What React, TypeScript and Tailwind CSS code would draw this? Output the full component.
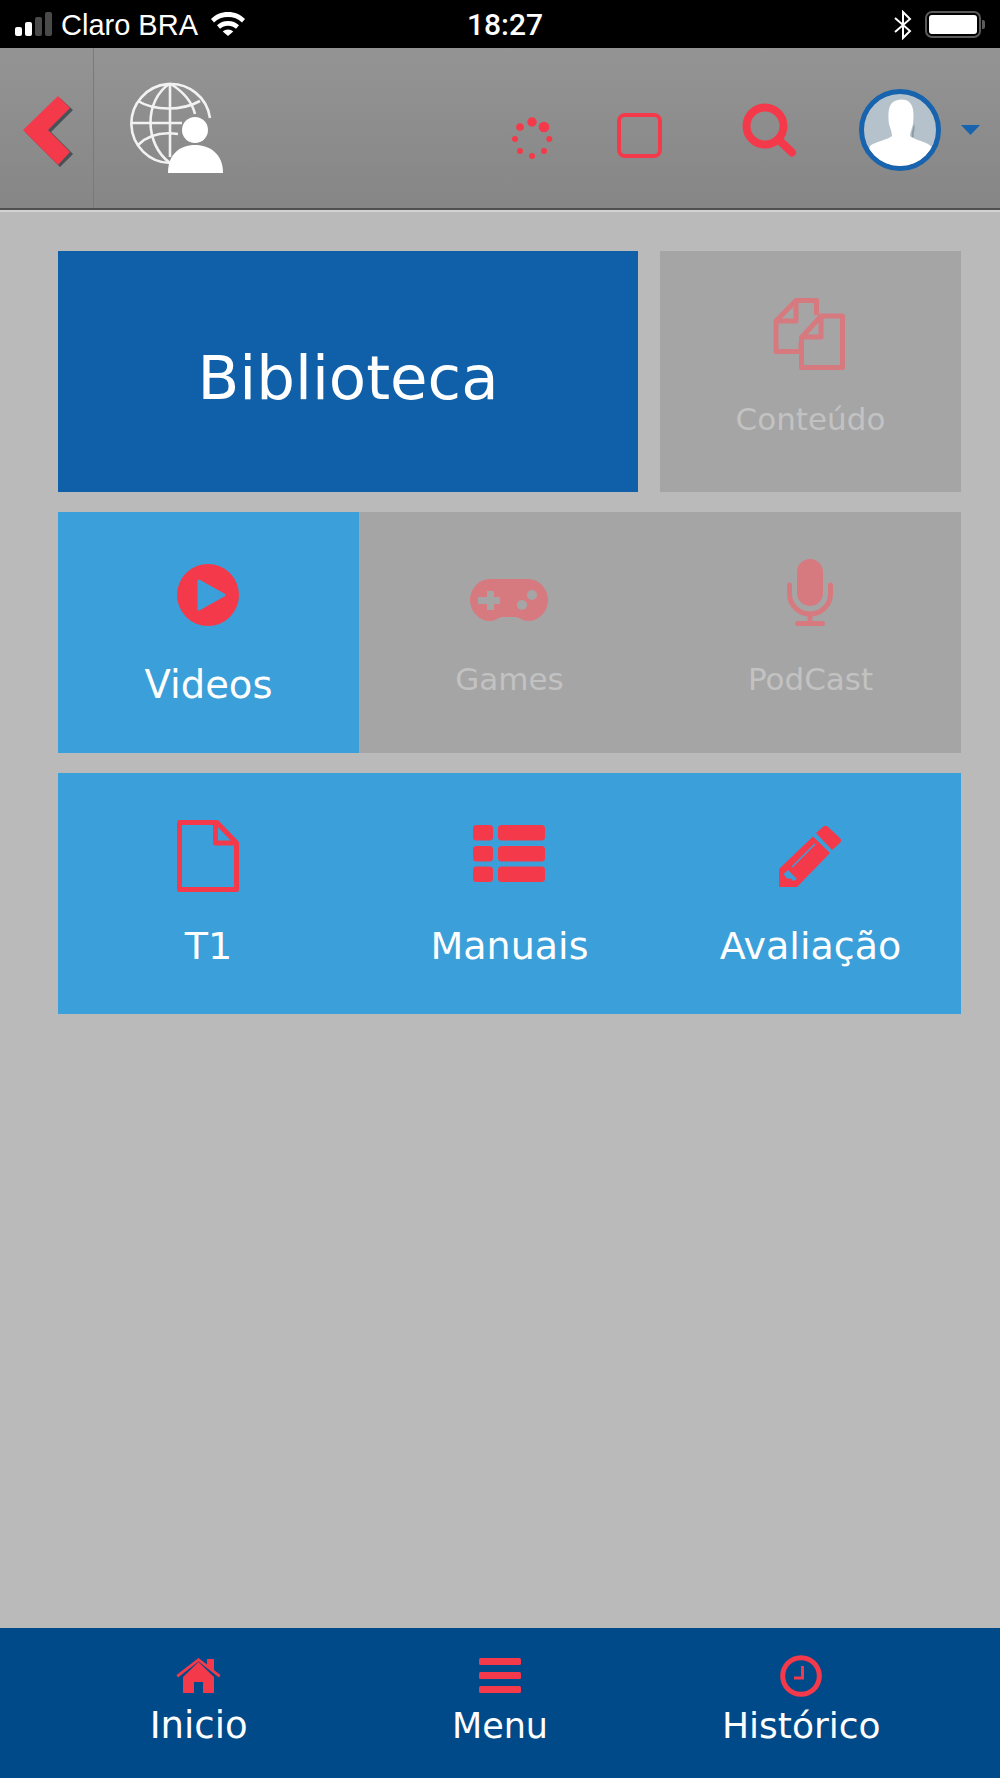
import React from "react";

const RED = "#f43a4a";
const FADED = "#d77a80";

function Chevron() {
  return (
    <svg className="ml-[23px] mt-[48px] shrink-0" width="50" height="72" viewBox="0 0 50 72">
      <polygon points="2,36 37,2 50,14 28,36 50,58 37,71" fill="#333d47" opacity="0.75" />
      <polygon points="0,34 35,0 47,12 25,34 47,56 35,69" fill={RED} />
    </svg>
  );
}

function GlobeUser() {
  return (
    <svg className="ml-[36px] mt-[34px] shrink-0" width="94" height="92" viewBox="0 0 94 92" fill="none" stroke="#f2f2f2" strokeWidth="2.6">
      <path d="M40 81 A39.500 39.500 0 1 1 80 36" />
      <path d="M40 1.500 C14 18 14 62 40 81" />
      <path d="M40 1.500 C54 10 62 20 65 32" />
      <path d="M40 1.500 V75" />
      <path d="M1 41 H52" />
      <path d="M8 19 C24 29 52 29 70 19" />
      <path d="M8 63 C20 51 34 50 48 52" />
      <circle cx="65" cy="48" r="13" fill="#ffffff" stroke="none" />
      <path d="M38 91 C38 72 50 63 65 63 C80 63 93 72 93 91 Z" fill="#ffffff" stroke="none" />
    </svg>
  );
}

function Spinner() {
  return (
    <svg className="ml-[287px] mt-[68px] shrink-0" width="44" height="44" viewBox="0 0 44 44" fill={RED}>
      <circle cx="21" cy="6" r="4.700" />
      <circle cx="33" cy="11" r="5.300" />
      <circle cx="38.300" cy="23" r="3" />
      <circle cx="33" cy="35" r="3" />
      <circle cx="21" cy="40" r="3" />
      <circle cx="9" cy="35" r="3" />
      <circle cx="4" cy="23" r="3" />
      <circle cx="9" cy="11" r="3.800" />
    </svg>
  );
}

function SearchIcon() {
  return (
    <svg className="ml-[80px] mt-[55px] shrink-0" width="55" height="54" viewBox="0 0 55 54" fill="none" stroke={RED}>
      <circle cx="23" cy="23" r="18.500" strokeWidth="8" />
      <path d="M37 37 L50 49.500" strokeWidth="8" strokeLinecap="round" />
    </svg>
  );
}

function Avatar() {
  return (
    <div className="ml-[62px] mt-[41px] h-[82px] w-[82px] shrink-0 overflow-hidden rounded-full border-[5px] border-[#1763ae] bg-[#b5c2cc]">
      <svg width="72" height="72" viewBox="0 0 72 72">
        <path d="M28 9 C32 5 42 4 46 9 C50 13 50 22 49 30 C48 35 46 38 46 42 C50 46 62 47 68 53 L72 72 H0 L6 52 C12 47 24 46 28 42 C28 38 26 34 25 30 C24 22 24 13 28 9 Z" fill="#ffffff" />
        <path d="M50 30 C49 35 47 38 48 43 L50 43 C49 38 52 34 50 30 Z" fill="#8e9ca6" />
      </svg>
    </div>
  );
}

function StatusBar() {
  return (
    <div className="flex h-[48px] items-start bg-black font-['Liberation_Sans',sans-serif] text-white">
      <div className="ml-[15px] mt-[12px] flex h-[24px] items-end gap-[3px]">
        <div className="h-[9px] w-[7px] rounded-[2px] bg-white" />
        <div className="h-[14px] w-[7px] rounded-[2px] bg-white" />
        <div className="h-[19px] w-[7px] rounded-[2px] bg-[#4a4a4a]" />
        <div className="h-[24px] w-[7px] rounded-[2px] bg-[#4a4a4a]" />
      </div>
      <span className="ml-[9px] mt-[10px] text-[29px] leading-[30px]">Claro BRA</span>
      <svg className="ml-[13px] mt-[12px]" width="34" height="24" viewBox="0 0 34 24" fill="#ffffff">
        <path d="M17 0 C24 0 29.500 2.500 34 7 L31 10.500 C27 6.800 22.500 5 17 5 C11.500 5 7 6.800 3 10.500 L0 7 C4.500 2.500 10 0 17 0 Z" />
        <path d="M17 9 C21.500 9 25 10.500 28 13.300 L25 16.700 C22.700 14.800 20.200 13.800 17 13.800 C13.800 13.800 11.300 14.800 9 16.700 L6 13.300 C9 10.500 12.500 9 17 9 Z" />
        <path d="M17 17.500 C19.200 17.500 20.800 18.200 22.300 19.500 L17 24 L11.700 19.500 C13.200 18.200 14.800 17.500 17 17.500 Z" />
      </svg>
      <span className="ml-[222px] mt-[10px] text-[30px] font-medium leading-[30px] [font-family:'Roboto',sans-serif]">18:27</span>
      <svg className="ml-[351px] mt-[10px]" width="18" height="30" viewBox="0 0 18 30" fill="none" stroke="#ffffff" strokeWidth="2">
        <path d="M1 8 L16 21 L9 28 V2 L16 9 L1 22" />
      </svg>
      <div className="ml-[13px] mt-[11px] h-[27px] w-[56px] rounded-[7px] border-[2px] border-[#5a5a5a] p-[2px]">
        <div className="h-full w-full rounded-[3px] bg-white" />
      </div>
      <div className="ml-[1px] mt-[20px] h-[9px] w-[3px] rounded-r-[2px] bg-[#5a5a5a]" />
    </div>
  );
}

function Header() {
  return (
    <div className="flex h-[162px] items-start border-b-[2px] border-[#4f4f4f] bg-linear-to-b from-[#949494] to-[#868686]">
      <div className="h-[160px] w-[94px] shrink-0 border-r-[1px] border-[#7a7a7a]">
        <Chevron />
      </div>
      <GlobeUser />
      <Spinner />
      <div className="ml-[62px] mt-[65px] h-[45px] w-[45px] shrink-0 rounded-[8px] border-[4px] border-[#f43a4a]" />
      <SearchIcon />
      <Avatar />
      <svg className="ml-[20px] mt-[77px] shrink-0" width="19" height="10" viewBox="0 0 19 10">
        <polygon points="0,0 19,0 9.500,10" fill="#1763ae" />
      </svg>
    </div>
  );
}

function PlayIcon() {
  return (
    <svg className="mr-[2px] mt-[52px]" width="62" height="62" viewBox="0 0 62 62">
      <circle cx="31" cy="31" r="31" fill={RED} />
      <path d="M22 17 L47 31 L22 45 Z" fill="#3b9fd9" stroke="#3b9fd9" strokeWidth="3" strokeLinejoin="round" />
    </svg>
  );
}

function GamepadIcon() {
  return (
    <svg className="mr-[2px] mt-[67px]" width="78" height="42" viewBox="0 0 78 42">
      <path d="M20 0 H58 A20 21 0 0 1 58 42 C52 42 50 38 45 38 H33 C28 38 26 42 20 42 A20 21 0 0 1 20 0 Z" fill={FADED} />
      <path d="M17 12 H24 V18 H30 V25 H24 V31 H17 V25 H8 V18 H17 Z" fill="#a5a5a5" />
      <circle cx="62" cy="16" r="5" fill="#a5a5a5" />
      <circle cx="52" cy="26" r="5" fill="#a5a5a5" />
    </svg>
  );
}

function MicIcon() {
  return (
    <svg className="mr-[2px] mt-[46px]" width="48" height="69" viewBox="0 0 48 69" fill="none" stroke={FADED}>
      <rect x="11" y="1" width="26" height="47" rx="13" fill={FADED} stroke="none" />
      <path d="M3.500 27 V36 C3.500 47 13 56 24 56 C35 56 44.500 47 44.500 36 V27" strokeWidth="5" strokeLinecap="round" />
      <path d="M24 56 V65" strokeWidth="5" />
      <path d="M11.500 65.500 H36.500" strokeWidth="5" strokeLinecap="round" />
    </svg>
  );
}

function DocsIcon() {
  return (
    <svg className="mr-[3px] mt-[45px]" width="76" height="76" viewBox="0 0 76 76" fill="none" stroke={FADED} strokeWidth="5" strokeLinejoin="round">
      <path d="M30 46 V55.500 H5 V25 L25 4.500 H45.500 V19" />
      <path d="M25 4.500 V25 H5" />
      <path d="M31 41 L50 20 H71.500 V71.500 H30.500 V41 Z" />
      <path d="M50 20 V41 H31" />
    </svg>
  );
}

function DocIcon() {
  return (
    <svg className="mr-[2px] mt-[47px]" width="62" height="72" viewBox="0 0 62 72" fill="none" stroke={RED} strokeWidth="5" strokeLinejoin="round">
      <path d="M2.500 2.500 H40 L59.500 23 V69.500 H2.500 Z" />
      <path d="M38.500 2.500 V23 H59.500" />
    </svg>
  );
}

function ListIcon() {
  return (
    <svg className="mr-[2px] mt-[52px]" width="72" height="57" viewBox="0 0 72 57" fill={RED}>
      <rect x="0" y="0" width="20" height="15.500" rx="3.500" />
      <rect x="25" y="0" width="47" height="15.500" rx="3.500" />
      <rect x="0" y="21" width="20" height="15.500" rx="3.500" />
      <rect x="25" y="21" width="47" height="15.500" rx="3.500" />
      <rect x="0" y="41.500" width="20" height="15.500" rx="3.500" />
      <rect x="25" y="41.500" width="47" height="15.500" rx="3.500" />
    </svg>
  );
}

function PencilIcon() {
  return (
    <svg className="mr-[2px] mt-[52px]" width="64" height="63" viewBox="0 0 64 63" fill={RED}>
      <path d="M1 44 L35 11.500 L52 28 L19 62 H1 Z" />
      <path d="M38 8 L45 1.800 C46.500 0.500 48.500 0.500 50 2 L62 13 C63.500 14.500 63.500 16.500 62 18 L54 25 Z" />
      <path d="M14 42 L37 19" stroke="#3b9fd9" strokeWidth="1.500" fill="none" />
      <path d="M5.500 49 L10 45 L19 54 L15 56 L13 53.500 H9 Z" fill="#3b9fd9" />
    </svg>
  );
}

type TileProps = { icon: React.ReactNode; label: string; className: string };

function Tile({ icon, label, className }: TileProps) {
  return (
    <div className="flex h-[241px] flex-col items-center">
      {icon}
      <span className={className}>{label}</span>
    </div>
  );
}

function HouseIcon() {
  return (
    <svg width="45" height="35" viewBox="0 0 45 35" fill={RED} className="mt-[3px]">
      <path d="M7 19 L22.500 4 L38 19 V35 H27 V24 H18 V35 H7 Z" />
      <path d="M0.500 17 L22.500 0 L31 6.500 V1 H38 V12 L44.500 17 L43 19.500 L22.500 3.500 L2 19.500 Z" />
    </svg>
  );
}

function MenuIcon() {
  return (
    <svg width="42" height="35" viewBox="0 0 42 35" fill={RED} className="mt-[3px]">
      <rect x="0" y="0" width="42" height="7" rx="1.500" />
      <rect x="0" y="14" width="42" height="7" rx="1.500" />
      <rect x="0" y="28" width="42" height="7" rx="1.500" />
    </svg>
  );
}

function ClockIcon() {
  return (
    <svg width="42" height="42" viewBox="0 0 42 42" fill="none" stroke={RED}>
      <circle cx="21" cy="21" r="18.300" strokeWidth="5" />
      <path d="M22.500 11 V23 H14" strokeWidth="3" />
    </svg>
  );
}

function NavItem({ icon, label, className }: { icon: React.ReactNode; label: string; className: string }) {
  return (
    <div className="flex flex-col items-center pt-[27px]">
      <div className="flex h-[42px] items-start">{icon}</div>
      <span className={className}>{label}</span>
    </div>
  );
}

export default function App() {
  return (
    <div className="flex h-[1778px] w-[1000px] flex-col bg-[#bababa] font-['DejaVu_Sans',sans-serif]">
      <StatusBar />
      <Header />
      <div className="h-[2px] bg-[#d2d2d2]" />
      <main className="flex flex-1 flex-col gap-[20px] pl-[58px] pr-[39px] pt-[39px]">
        <div className="flex gap-[22px]">
          <div className="flex h-[241px] w-[580px] items-center justify-center bg-[#1060a9] pt-[12px] text-[61px] leading-[72px] text-white">
            Biblioteca
          </div>
          <div className="w-[301px] bg-[#a5a5a5]">
            <Tile icon={<DocsIcon />} label="Conteúdo" className="mt-[29px] text-[31px] leading-[36px] text-[#c2c2c2]" />
          </div>
        </div>
        <div className="grid grid-cols-3 bg-[#a5a5a5]">
          <div className="bg-[#3b9fd9]">
            <Tile icon={<PlayIcon />} label="Videos" className="mt-[37px] text-[38.500px] leading-[44px] text-white" />
          </div>
          <Tile icon={<GamepadIcon />} label="Games" className="mt-[40px] text-[31px] leading-[36px] text-[#c2c2c2]" />
          <Tile icon={<MicIcon />} label="PodCast" className="mt-[34px] text-[31px] leading-[36px] text-[#c2c2c2]" />
        </div>
        <div className="grid grid-cols-3 bg-[#3b9fd9]">
          <Tile icon={<DocIcon />} label="T1" className="mt-[32px] text-[38px] leading-[44px] text-white" />
          <Tile icon={<ListIcon />} label="Manuais" className="mt-[42px] text-[38px] leading-[44px] text-white" />
          <Tile icon={<PencilIcon />} label="Avaliação" className="mt-[36px] text-[38px] leading-[44px] text-white" />
        </div>
      </main>
      <nav className="grid h-[150px] grid-cols-3 bg-[#004a8a] px-[48px]">
        <NavItem icon={<HouseIcon />} label="Inicio" className="mt-[9px] text-[37px] leading-[40px] text-white" />
        <NavItem icon={<MenuIcon />} label="Menu" className="mt-[9px] text-[35px] leading-[40px] text-white" />
        <NavItem icon={<ClockIcon />} label="Histórico" className="mt-[9px] text-[36px] leading-[40px] text-white" />
      </nav>
    </div>
  );
}
